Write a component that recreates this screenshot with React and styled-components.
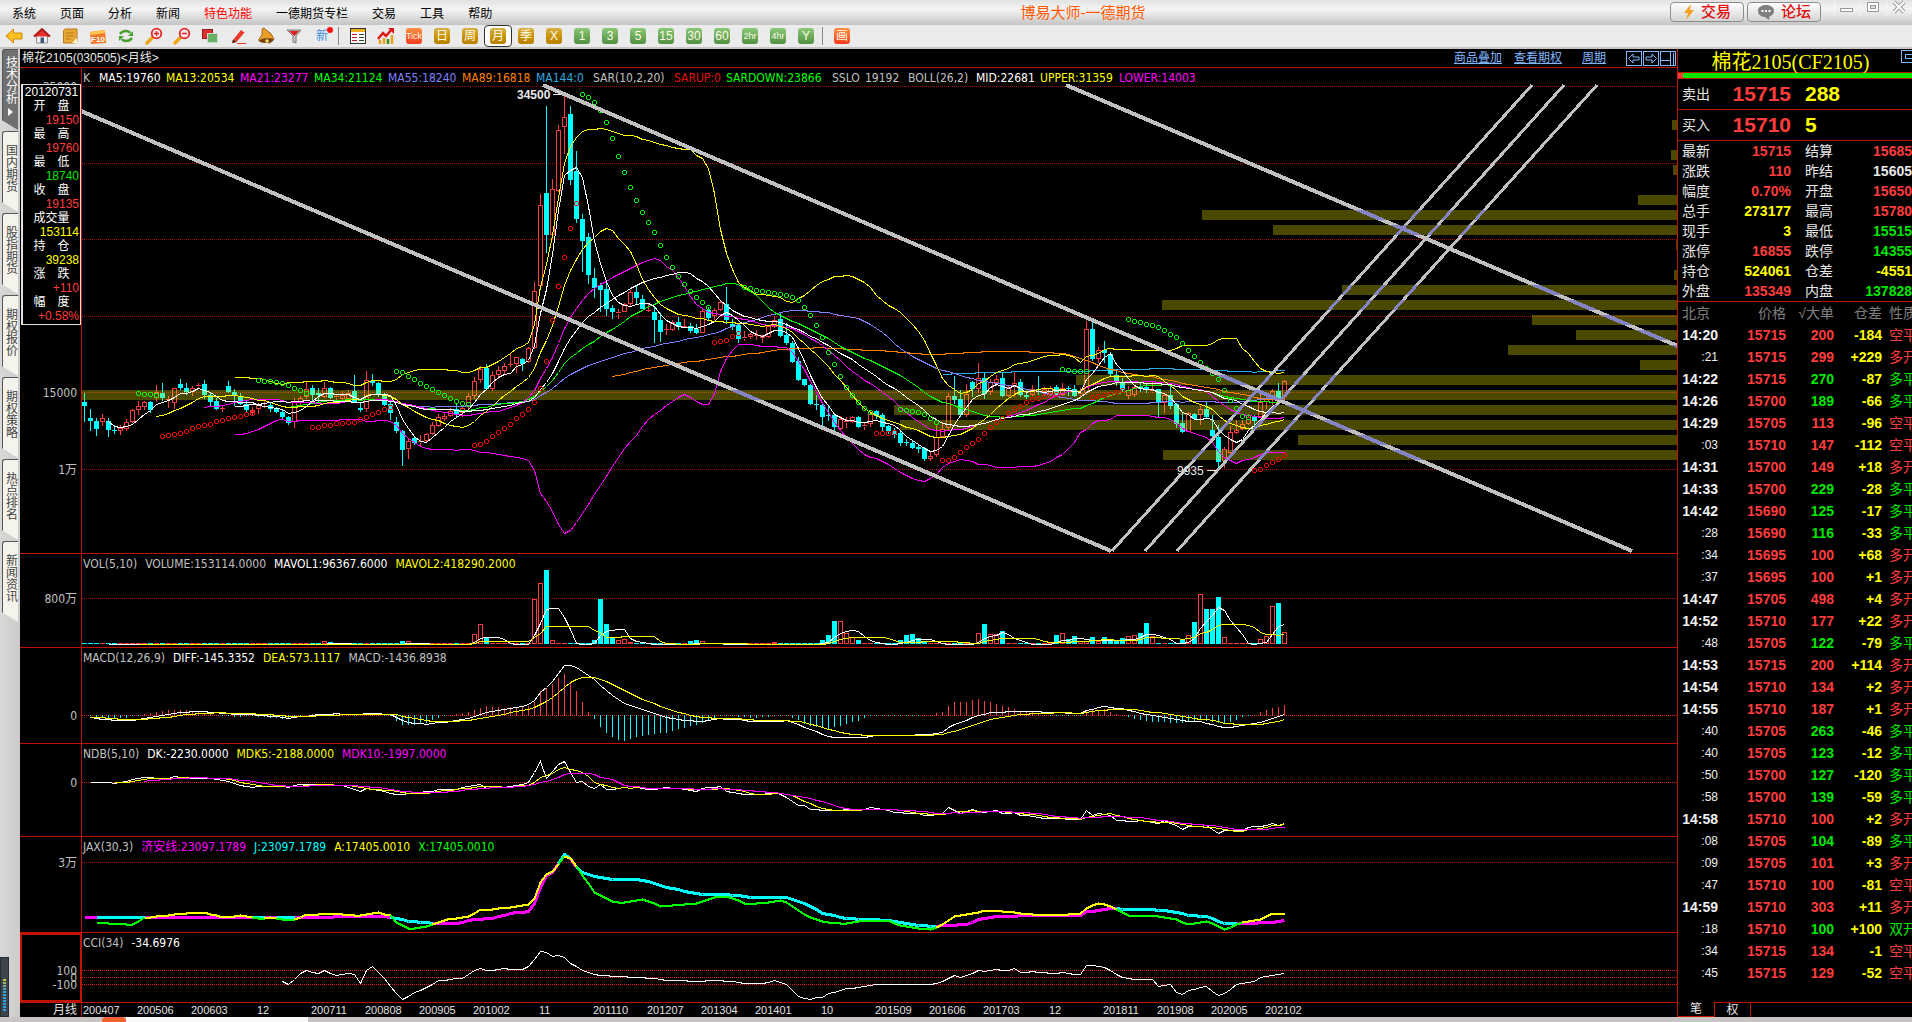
import React from 'react';
import styled, { createGlobalStyle, css } from 'styled-components';

/* ------------------------------------------------------------------ */
/* Palette                                                             */
/* ------------------------------------------------------------------ */
const C = {
  red: '#ff3c3c', cyan: '#00ffff', yellow: '#ffff00', green: '#00e600', lime: '#00ff00',
  white: '#ffffff', silver: '#c0c0c0', magenta: '#ff00ff', violet: '#8080ff',
  orange: '#ff8000', sky: '#30a8e0', pure: '#ff0000', rule: '#c01400', grey: '#808080',
};

const UI = '"Liberation Sans", "Noto Sans CJK SC", sans-serif';
const TAHOMA = '"DejaVu Sans Condensed", "Liberation Sans", "Noto Sans CJK SC", sans-serif';

const Global = createGlobalStyle`
  *, *::before, *::after { box-sizing: border-box; }
  body { margin: 0; background: #c8c4c4; font-family: ${UI}; font-size: 12px; line-height: 14px; }
  button { font: inherit; color: inherit; padding: 0; border: 0; background: none; }
`;

/* ------------------------------------------------------------------ */
/* Window frame                                                        */
/* ------------------------------------------------------------------ */
const Window = styled.div`
  display: flex; flex-direction: column; min-height: 100vh; overflow: hidden;
`;
const MenuBar = styled.header`
  display: flex; align-items: center; height: 25px;
  background: linear-gradient(#e2e2e2, #f4f4f4 35%, #e4e4e4 60%, #c4c4c4);
`;
const Menu = styled.nav`display: flex; gap: 24px; padding: 2px 0 0 12px;`;
const MenuItem = styled.button`color: ${p => (p.$hot ? '#ff0000' : '#000')}; white-space: nowrap;`;
const WindowTitle = styled.h1`
  flex: 1; margin: 0; padding-left: 4px; text-align: center; font-size: 15px; line-height: 20px; font-weight: 400; color: #ff5a00;
`;
const HeadButtons = styled.div`display: flex; gap: 3px; align-self: flex-start; padding-top: 2px;`;
const HeadButton = styled.button`
  display: flex; align-items: center; justify-content: center; gap: 6px; width: 74px; height: 20px;
  border: 1px solid #8c8c8c; border-radius: 4px; background: linear-gradient(#fff, #d4d4d4);
  color: #e01010; font-size: 15px; font-weight: 500;
`;
const WinControls = styled.div`
  display: flex; align-self: flex-start; margin-left: 13px; width: 78px; height: 16px;
`;
const WinControl = styled.button`
  width: 25px; flex: none; height: 16px; border-left: 1px solid #f4f4f4;
  & + & { margin-left: 1px; }
`;

/* ------------------------------------------------------------------ */
/* Toolbar                                                             */
/* ------------------------------------------------------------------ */
const Toolbar = styled.div`
  display: flex; align-items: center; height: 24px;
  background: #ebebeb; border-bottom: 2px solid #c8c4c4;
`;
const ToolButton = styled.button`
  display: flex; align-items: center; justify-content: center; width: 28px; height: 22px;
  ${p => p.$on && css`background: #fff; border: 1px solid #333; border-radius: 4px;`}
`;
const ToolSep = styled.span`width: 8px; height: 18px; border-left: 1px solid #8a8a8a; margin-left: 2px; margin-right: -2px;`;
const tones = {
  gold: 'linear-gradient(#d8b04a, #c89000 60%, #b88000)',
  green: 'linear-gradient(#8cc878, #509040)',
  red: 'linear-gradient(#ff9040, #f03c20)',
};
const Chip = styled.span`
  display: flex; align-items: center; justify-content: center; width: 16px; height: 16px;
  border-radius: 3px; background: ${p => tones[p.$tone]}; color: #fffbe8;
  font-size: ${p => (p.$small ? 9 : 12)}px; line-height: 16px; white-space: nowrap;
`;
const NewChip = styled.span`
  position: relative; color: #3c8ce0; font-size: 12px;
  &::after { content: ''; position: absolute; right: -5px; top: -2px; width: 6px; height: 6px; border-radius: 3px; background: #ff1010; }
`;

/* ------------------------------------------------------------------ */
/* Side tabs                                                           */
/* ------------------------------------------------------------------ */
const Body = styled.div`display: flex; flex: 1; min-height: 0;`;
const SideTabs = styled.nav`
  display: flex; flex-direction: column; justify-content: space-between; width: 20px; flex: none;
  background: linear-gradient(90deg, #d8d8d8, #cecaca);
`;
const TabStack = styled.div`display: flex; flex-direction: column; gap: 1px; padding-left: 2px;`;
const SideTab = styled.button`
  display: flex; align-items: center; justify-content: center; gap: 4px; width: 16px; height: 81px; padding-bottom: 8px;
  writing-mode: vertical-rl; text-orientation: upright; font-size: 12px; line-height: 16px;
  color: ${p => (p.$on ? '#fff' : '#444')};
  background: ${p => (p.$on ? '#707070' : '#f4f3ec')};
  border-left: 1px solid #555; border-top: 1px solid #555; border-radius: 3px 0 0 0;
  clip-path: polygon(0 0, 100% 0, 100% 100%, 0 88%);
`;
const Meter = styled.div`
  width: 9px; height: 60px; padding: 20px 2px 4px; background: #3c444c; border: 1px solid #262c34;
  &::before {
    content: ''; display: block; height: 34px;
    background: repeating-linear-gradient(#3c444c 0 1px, transparent 1px 3px), linear-gradient(#d8c820, #30a0e0 40%);
  }
`;

/* ------------------------------------------------------------------ */
/* Chart area                                                          */
/* ------------------------------------------------------------------ */
const ChartArea = styled.main`
  display: flex; flex-direction: column; flex: 1; min-width: 0; background: #000;
`;
const ChartHead = styled.div`
  display: flex; align-items: center; height: 19px; padding-left: 2px; color: #e8e8e8;
  border-bottom: 1px solid ${C.rule};
`;
const ChartName = styled.h2`flex: 1; margin: 0; font-size: 12px; font-weight: 400;`;
const HeadLinks = styled.div`display: flex; align-items: center;`;
const HeadLink = styled.a`
  color: #80b8ff; text-decoration: underline; margin-right: ${p => p.$gap || 12}px;
`;
const NavBoxes = styled.div`display: flex; gap: 1px; padding-right: 1px;`;
const NavBox = styled.button`width: 16px; height: 15px; border: 1px solid #80b8ff; display: flex; align-items: center; justify-content: center;`;

const Panel = styled.section`
  display: flex; position: relative; flex: ${p => (p.$h ? 'none' : '1')};
  ${p => p.$h && css`height: ${p.$h}px; border-top: 1px solid ${C.rule};`}
`;
const Axis = styled.div`
  width: 62px; flex: none; border-right: 1px solid ${C.rule};
  ${p => p.$framed && css`outline: 2px solid ${C.rule}; outline-offset: -2px;`}
`;
const Plot = styled.div`display: flex; flex-direction: column; flex: 1; min-width: 0;`;
const Legend = styled.div`
  display: flex; align-items: center; height: 16px; padding-top: 3px; padding-left: 1px; font-family: ${TAHOMA}; font-size: 12px; white-space: nowrap;
`;
const LegendItem = styled.span`
  color: ${p => p.$c}; flex: none;
  ${p => (p.$w ? css`width: ${p.$w}px;` : css`margin-right: 8px;`)}
`;
const Canvas = styled.svg`
  display: block; width: 100%; height: 100%; flex: 1; min-height: 0; overflow: hidden;
  font-family: ${TAHOMA}; font-size: 12px;
`;
const PriceMark = styled.text`font-family: ${UI}; fill: #e8e8e8; font-weight: ${p => (p.$bold ? 700 : 400)};`;
const DateRow = styled.div`
  display: flex; height: 15px; border-top: 1px solid ${C.rule}; color: #e0e0e0; line-height: 14px; overflow: hidden;
`;
const Period = styled.div`width: 62px; flex: none; text-align: right; padding-right: 4px; border-right: 1px solid ${C.rule};`;
const DateLabel = styled.span`flex: none; width: ${p => (p.$wide ? 66 : 54)}px; font-size: 11px; padding-left: 1px;`;

const DataBox = styled.dl`
  position: absolute; left: 1px; top: 16px; width: 60px; margin: 0; background: #000; color: #fff;
  border: 1px solid #e0e0e0; border-left-width: 2px; line-height: 14px; padding-bottom: 1px;
`;
const DataDate = styled.div`font-size: 12px; text-align: center;`;
const DataKey = styled.dt`text-align: center; white-space: pre;`;
const DataVal = styled.dd`margin: 0; text-align: right; padding-right: 1px; color: ${p => p.$c};`;

/* ------------------------------------------------------------------ */
/* Quote panel                                                         */
/* ------------------------------------------------------------------ */
const Quote = styled.aside`
  display: flex; flex-direction: column; width: 235px; flex: none; background: #000; overflow: hidden;
  border-left: 1px solid ${C.rule};
`;
const QuoteHead = styled.div`display: flex; height: 24px; border-bottom: 1px solid ${C.rule};`;
const QuoteName = styled.h2`
  flex: 1; margin: 0; padding-left: 2px; text-align: center; color: ${C.yellow}; font-weight: 400;
  font-family: "Liberation Serif", "Noto Sans CJK SC", serif; font-size: 20px; line-height: 26px; white-space: nowrap;
`;
const QuoteMax = styled.button`width: 11px; height: 13px; margin-top: 1px; border: 1px solid #80b8ff; border-right: 0; padding: 3px 0 3px 3px;
  &::before { content: ''; display: block; height: 5px; border: 1px solid #80b8ff; border-right: 0; }`;
const Balance = styled.div`
  height: 6px; border-bottom: 1px solid ${C.rule}; border-left: 5px solid ${C.red}; background: ${C.green};
`;
const Level = styled.div`
  display: flex; align-items: center; height: 31px; padding-left: 4px; border-bottom: 1px solid ${C.rule};
  color: #e8e8e8; font-size: 14px;
`;
const LevelPrice = styled.span`width: 81px; text-align: right; color: ${C.red}; font-size: 21px; font-weight: 700;`;
const LevelQty = styled.span`margin-left: 14px; color: ${C.yellow}; font-size: 21px; font-weight: 700;`;
const Facts = styled.dl`
  display: grid; grid-template-columns: 28px 81px 42px 79px; grid-auto-rows: 20px; align-items: center; margin: 0; padding-left: 4px;
  border-bottom: 1px solid ${C.rule}; font-size: 14px;
`;
const FactKey = styled.dt`color: #e8e8e8; text-align: right;`;
const FactVal = styled.dd`margin: 0; text-align: right; font-weight: 700; color: ${p => p.$c};`;
const Ticks = styled.table`
  table-layout: fixed; width: 247px; border-collapse: collapse; font-size: 14px; line-height: 22px; flex: none;
  th { font-weight: 400; color: ${C.grey}; }
  td, th { padding: 0; height: 22px; text-align: right; white-space: nowrap; }
  th:first-child { padding-left: 4px; text-align: left; }
  td:last-child, th:last-child { text-align: left; padding-left: 7px; }
`;
const Num = styled.td`color: ${p => p.$c}; font-weight: ${p => (p.$thin ? 400 : 700)}; ${p => p.$sec && css`font-size: 12px;`}`;
const Foot = styled.div`display: flex; height: 15px; margin-top: auto; color: #e8e8e8;`;
const FootTab = styled.button`
  width: ${p => (p.$on ? 37 : 36)}px; border-right: 1px solid ${C.rule}; line-height: 14px;
  ${p => (p.$on ? css`border-bottom: 1px solid ${C.rule};` : css`border-top: 1px solid ${C.rule};`)}
`;
const FootRest = styled.span`flex: 1; border-top: 1px solid ${C.rule};`;
const Strip = styled.footer`
  display: flex; height: 5px; background: #c8c4c4; padding-left: 102px;
  &::before { content: ''; width: 24px; height: 5px; background: #f06030; border-radius: 4px 4px 0 0; }
  &::after { content: ''; width: 182px; height: 5px; background: #f8f8f8; }
`;

/* ------------------------------------------------------------------ */
/* Price data. Heights are stored in thirds of a pixel; `base` shifts  */
/* one block of months. Row: kind, body top, body bottom, high, low.   */
/* ------------------------------------------------------------------ */
const block = (base, text) =>
  text.trim().split(';').map(s => {
    const [k, ...n] = s.trim().split(' ');
    const [t, b, h, l] = n.map(v => Math.round((Number(v) + base) / 3));
    return { up: k === 'r', t, b, h, l };
  });

const CANDLES = [
  ...block(990, `c 216 228 190 276;c 264 273 236 304;c 273 297 264 318;r 264 276 252 288;c 272 300 264 320;c 299 302 284 312;r 294 302 286 314;r 276 298 268 302;r 240 276 236 280;r 229 240 214 256;r 216 232 212 240;c 216 240 214 248;r 187 205 165 215;c 190 205 158 214;r 208 212 198 234;r 175 218 174 236;c 162 174 147 180;c 173 187 160 194;r 173 186 168 198;r 165 171 160 178;c 162 196 150 206;c 195 216 188 228;c 213 237 204 240;r 235 238 226 246;c 168 186 153 190;c 186 199 176 228;c 200 222 188 226;c 222 241 214 246;r 240 248 232 258;r 223 238 218 252;r 219 222 214 234;c 225 236 215 246;c 236 247 232 250;c 247 262 240 270;c 261 279 258 284;r 214 277 204 294;r 203 218 198 226;r 178 200 155 206;c 174 194 164 214;c 188 196 174 216;r 174 200 156 203;c 174 204 170 208;r 198 205 192 210;r 196 208 184 212;r 188 207 180 214;c 183 216 136 220;c 234 240 218 246;r 151 238 124 246;c 152 160 132 168;c 159 192 156 202;c 196 224 190 228;c 222 250 214 270;c 276 304 260 310;c 303 360 300 408;r 334 358 326 388;c 324 339 318 346;r 333 340 316 348;r 313 334 308 340;r 286 311 276 316;r 260 287 252 292;r 259 266 250 272;r 242 257 234 262;c 238 254 220 260;r 235 250 226 262;r 199 232 190 240;r 152 199 142 206;r 118 151 108 158;c 114 177 102 180;r 136 177 124 182;r 121 134 108 146;r 107 122 98 132;r 103 106 73 110;r 82 103 80 130;c 88 103 84 124;r 55 97 50 100`),
  ...block(0, `r 874 1045 846 1047;r 616 857 582 860;c 580 704 318 758;r 568 706 538 718;r 390 574 375 575;r 352 382 284 462;c 342 540 318 556;c 514 656 454 668;c 657 722 642 816;c 712 824 698 852;c 834 863 804 893;c 855 869 848 935;c 867 926 842 948;c 925 937 915 957;r 937 942 927 957;r 913 935 910 937;r 877 911 870 918;c 876 893 856 914;c 898 926 885 928;r 930 934 910 936;c 936 960 922 1028`),
  ...block(900, `c 60 95 38 127;r 88 90 72 106;r 66 90 60 94;c 66 82 50 90;r 79 82 58 85;c 78 94 70 98;c 88 98 72 101;r 34 98 26 98;c 30 53 20 60;r 31 48 25 60;r 6 30 0 34;c 12 60 -38 72;c 71 80 56 90;c 75 117 70 130;r 112 117 92 124;r 103 112 98 117;r 106 108 90 120;r 106 114 104 130;r 78 110 74 114;r 59 80 48 84;c 57 108 38 112;c 104 130 70 134;c 128 186 122 190;c 184 240 172 243;c 237 255 236 258;c 254 312 252 315;c 312 316 285 330;c 315 350 308 382;c 346 349 316 362;c 345 382 340 400;r 357 386 348 390;r 364 368 350 384;r 352 367 348 370;c 351 380 348 384;r 374 380 366 390;r 342 373 330 382;c 334 348 330 358;c 345 381 340 392;c 378 393 374 402;c 392 404 385 414;c 400 430 392 438;c 427 430 416 438;c 430 444 420 446;c 441 446 436 458;c 445 477 440 483;r 468 476 452 484;r 410 466 375 470;r 386 410 365 414;r 289 385 280 390;c 289 301 228 313;c 297 344 270 350;r 283 344 252 350;c 246 266 243 292;r 235 268 188 280;c 234 282 218 298;r 245 275 238 286;r 236 248 225 258;c 234 288 218 291;r 262 288 256 292;r 250 262 216 292;c 246 286 238 290;c 285 291 278 296;r 267 286 254 288;c 268 271 228 284;r 268 276 262 288;r 265 284 258 288;c 262 284 254 290;r 264 285 250 288;c 265 268 258 288;c 266 288 255 291;r 280 286 265 290;r 88 280 62 286;c 87 177 65 182;r 151 177 140 190;c 149 160 124 190;c 163 222 155 228;c 226 247 212 258;c 245 270 235 280;r 270 287 258 296;r 261 286 254 290;c 260 266 248 275;c 262 271 252 278;r 270 276 245 280;c 268 308 266 354;r 285 308 280 340;c 284 318 252 326;c 312 373 310 384;c 370 396 340 399;r 340 395 336 397;c 343 357 340 360;r 326 346 318 376;c 328 350 306 356;c 390 408 345 412;c 411 486 376 504;r 448 483 440 503;r 397 458 378 462;r 389 400 360 402;r 373 388 360 390;r 351 372 342 376;c 351 364 345 392;r 307 350 276 354;r 293 306 286 328;r 273 295 266 316;c 273 300 248 304;r 244 290 240 305`),
];
const N = CANDLES.length;
const xAt = i => 84 + 6 * i;
const closes = CANDLES.map(c => (c.up ? c.t : c.b));

const sma = (list, n) => list.map((_, i) => {
  if (i < n - 1 || list[i - n + 1] == null) return null;
  let s = 0;
  for (let k = i - n + 1; k <= i; k += 1) s += list[k];
  return s / n;
});
const band = (list, n, f) => {
  const mid = sma(list, n);
  return mid.map((m, i) => {
    if (m == null) return null;
    let s = 0;
    for (let k = i - n + 1; k <= i; k += 1) s += (list[k] - m) ** 2;
    return m + f * Math.sqrt(s / n);
  });
};
const points = list => list
  .map((y, i) => (y == null ? null : `${xAt(i) + 0.5},${Math.round(y) + 0.5}`))
  .filter(Boolean).join(' ');

/* Knots "month,height" are joined month by month. */
const knots = (base, text) => {
  const ks = text.trim().split(' ').map(s => s.split(',').map(Number));
  const out = Array(N).fill(null);
  for (let j = 0; j < ks.length - 1; j += 1) {
    const [a, ya] = ks[j];
    const [b, yb] = ks[j + 1];
    for (let i = Math.ceil(a); i <= Math.min(b, N - 1); i += 1) {
      out[i] = (base + ya + ((yb - ya) * (i - a)) / (b - a)) / 3;
    }
  }
  return out;
};

const SAR = [
  [9, C.lime, 990, [191, 193, 194, 196]],
  [13, C.pure, 990, [320, 317, 314, 310, 305, 295, 290, 287, 282, 275, 270, 266, 262, 258, 254, 250]],
  [29, C.lime, 990, [152, 154, 154, 156, 160, 165, 174, 182, 191]],
  [38, C.pure, 990, [292, 291, 287, 285, 281, 279, 278, 276, 269, 262, 253, 246, 238, 232]],
  [52, C.lime, 990, [125, 128, 139, 149, 160, 169, 178, 187, 197, 206, 214, 220, 223]],
  [65, C.pure, 990, [347, 343, 335, 320, 307, 296, 283, 266, 252, 238, 217, 175, 95]],
  [78, C.pure, 0, [962, 860, 772, 686, 610]],
  [83, C.lime, 0, [284, 293, 308, 330, 368, 416, 470, 518, 563, 602, 638, 668, 698, 737, 773, 803, 830, 854, 875, 893, 908, 923]],
  [105, C.pure, 900, [128, 125, 122, 110, 101]],
  [110, C.lime, 0, [862, 865, 872, 875, 877, 880, 883, 887, 892, 902, 922, 947, 977, 1013]],
  [124, C.lime, 900, [158, 194, 230, 263, 287, 308, 325, 338]],
  [132, C.pure, 900, [401, 401, 400, 398]],
  [136, C.lime, 900, [328, 332, 334, 337, 343, 355, 368]],
  [143, C.pure, 900, [482, 482, 473, 458, 443, 431, 419, 401, 383, 367, 354, 341, 328, 319, 307, 299, 295, 290, 287, 283]],
  [163, C.lime, 900, [209, 211, 213, 214, 215]],
  [168, C.pure, 900, [293, 290, 287, 283, 277, 272]],
  [174, C.lime, 900, [58, 63, 68, 73, 77, 82, 90, 103, 113, 130, 152, 170, 188, 205, 220, 238, 272, 302, 325, 350, 353]],
  [195, C.pure, 900, [511, 509, 497, 488, 478, 467]],
];

/* Volume-at-price bars: top, left edge. */
const PROFILE = [
  [120, 1672], [150, 1671], [165, 1673], [195, 1638], [210, 1202], [225, 1273], [240, 1676], [270, 1674],
  [285, 1342], [300, 1162], [315, 1532], [330, 1576], [345, 1508], [360, 1640], [375, 1076], [390, 82],
  [405, 894], [420, 900], [435, 1298], [450, 1163],
];
const TRENDS = [
  [81, 111, 1111, 551, 4], [543, 85, 1632, 551, 4], [1066, 85, 1680, 347, 4],
  [1532, 85, 1112, 551, 3], [1564, 85, 1145, 551, 3], [1597, 85, 1177, 551, 3],
];

const VOL = Array(N).fill(1);
[[40, 3, 2], [53, 3, 3], [65, 10, 20, 6], [75, 45, 61, 74, 4], [85, 4, 45, 20, 6, 4, 5, 2],
  [101, 3, 4, 3], [115, 2], [123, 4, 9, 23, 23, 11, 7, 4], [136, 4, 9, 10, 6, 3], [149, 11, 20, 10, 10, 13],
  [162, 9, 11, 5, 8, 3, 3, 7, 3, 7, 3, 4, 6, 8, 9, 11, 21, 8], [183, 4, 9, 22, 50, 35, 35, 47, 7],
  [196, 5, 8, 38, 41, 12]].forEach(([s, ...v]) => v.forEach((h, k) => { VOL[s + k] = h; }));

const DIFF = knots(1920, '1,230 3,236 5,240 7,241 9,237 12,228 15,218 19,212 22,216 25,222 28,222 31,227 34,234 38,224 42,220 45,222 48,218 51,222 53,241 55,248 57,251 60,245 64,233 67,216 70,208 73,197 74,192 75,180 76,155 77,140 78,122 79,98 80,76 81,76 82,80 83,92 85,118 87,150 89,178 90,190 93,207 97,230 100,239 103,243 106,235 109,238 112,244 117,241 119,252 121,268 124,287 126,292 129,292 132,285 141,283 143,275 144,262 145,252 147,240 149,224 151,217 154,214 159,214 161,217 166,218 167,209 169,202 170,199 173,205 176,218 179,228 182,238 184,243 186,244 188,252 190,261 192,259 195,250 198,234 200,222');
const DEA = DIFF.reduce((out, d, i) => {
  const prev = out[i - 1];
  out.push(d == null ? null : prev == null ? d : prev + (d - prev) * 0.2);
  return out;
}, []);

const DK = knots(1920, '1,427 3,426 5,428 7,422 8,416 10,411 14,415 15,409 18,413 21,413 24,424 26,434 28,440 31,437 34,440 36,431 40,434 43,435 45,448 46,452 47,444 50,453 52,463 53,463 55,457 58,453 59,446 62,446 64,438 66,433 67,443 70,440 72,434 74,427 76,364 77,415 79,372 80,363 82,427 83,423 84,437 85,443 86,433 87,446 89,445 91,438 94,448 97,442 100,447 102,453 103,443 105,441 106,437 107,453 110,463 113,462 115,455 117,470 119,496 120,496 121,507 125,510 127,507 129,510 131,502 133,506 135,515 139,520 140,526 143,520 144,500 146,518 148,508 150,516 152,510 153,520 155,517 156,525 158,527 160,535 162,533 166,538 167,509 168,525 169,519 171,525 172,539 174,543 176,541 179,550 180,541 182,555 183,568 184,559 187,556 189,580 190,570 193,570 194,560 196,558 198,549 199,556 200,550');
const JLINE = knots(1920, '0,832 50,829 52,834 54,842 58,848 62,848 65,838 68,833 71,820 74,812 75,790 76,740 77,705 78,695 79,668 80,643 81,655 82,680 83,695 85,708 88,716 92,718 94,722 97,740 102,760 108,764 112,772 117,772 120,788 123,818 127,834 132,838 135,842 137,850 140,856 142,858 143,856 147,852 149,838 152,829 158,825 166,824 167,814 171,804 175,808 178,808 181,812 184,824 187,829 190,848 193,848 197,847 200,841');
const ALINE = knots(1920, '2,846 5,850 8,851 10,832 14,824 18,816 20,816 23,831 26,825 29,833 31,832 34,838 35,838 37,822 41,819 46,825 49,815 51,826 52,845 54,863 56,862 58,852 61,835 64,829 66,808 69,805 72,797 74,793 75,775 76,725 77,702 78,692 79,672 80,648 81,655 82,678 83,705 85,755 88,783 90,786 93,776 94,782 96,797 102,788 105,770 107,768 110,788 114,787 116,779 117,785 119,810 121,832 124,847 127,848 130,841 134,841 136,856 141,867 143,852 145,828 148,820 150,810 153,812 158,822 166,820 167,803 169,788 171,797 174,824 178,825 182,838 184,852 187,842 190,867 193,846 196,838 198,820 200,818');
const CCI = knots(1920, '33,1023 34,1031 36,1000 37,991 39,1000 40,991 42,1006 44,1000 45,1002 46,1028 47,991 48,979 50,1015 52,1058 53,1078 55,1055 57,1042 59,1021 63,1013 65,990 66,983 67,991 70,985 73,988 74,978 75,958 76,932 77,935 78,948 79,946 80,952 81,968 83,990 85,1001 88,1009 93,1010 96,1018 102,1023 106,1019 109,1027 113,1029 115,1021 117,1033 119,1068 121,1078 122,1072 123,1072 124,1060 127,1045 130,1039 132,1031 141,1033 143,1023 145,1006 146,1012 149,991 150,994 152,986 154,991 155,985 156,996 158,993 162,1000 163,997 166,1003 167,976 168,976 170,982 173,1010 174,1015 178,1018 179,1039 181,1033 182,1056 183,1063 184,1050 187,1037 189,1066 190,1060 192,1033 195,1024 196,1012 200,1000');
const J_RUNS = [[0, 2, 'm'], [2, 10, 'c'], [10, 28, 'm'], [28, 30, 'c'], [30, 32, 'm'], [32, 35, 'c'], [35, 51, 'm'], [51, 58, 'c'], [58, 79, 'm'], [79, 81, 'c'], [81, 82, 'm'], [82, 142, 'c'], [142, 172, 'm'], [172, 192, 'c'], [192, 200, 'm']];
const A_RUNS = [[2, 10, 'g'], [10, 28, 'y'], [28, 30, 'g'], [30, 32, 'y'], [32, 35, 'g'], [35, 51, 'y'], [51, 58, 'g'], [58, 79, 'y'], [79, 80, 'g'], [80, 82, 'y'], [82, 142, 'g'], [142, 172, 'y'], [172, 193, 'g'], [193, 200, 'y']];
const RUN_COLOR = { m: C.magenta, c: C.cyan, g: C.lime, y: C.yellow };

/* ------------------------------------------------------------------ */
/* Drawing helpers                                                     */
/* ------------------------------------------------------------------ */
const Line = ({ data, color, width = 1 }) => (
  <polyline points={points(data)} fill="none" stroke={color} strokeWidth={width} />
);
const Runs = ({ data, runs, width }) => runs.map(([a, b, k]) => (
  <polyline key={a} fill="none" stroke={RUN_COLOR[k]} strokeWidth={width}
    points={points(data.map((y, i) => (i >= a && i <= b ? y : null)))} />
));
const Grid = ({ ys, bright }) => ys.map(y => (
  <line key={y} x1="82" x2="6000" y1={y + 0.5} y2={y + 0.5} stroke={bright ? '#e02020' : '#a80c0c'} strokeDasharray="1 1" />
));
/* A small ring drawn pixel by pixel. */
const Ring = ({ x, y, color }) => (
  <path fill={color} d={`M${x - 1} ${y - 2}h3v1h-3zM${x - 1} ${y + 2}h3v1h-3zM${x - 2} ${y - 1}h1v3h-1zM${x + 2} ${y - 1}h1v3h-1z`} />
);
const Drawing = ({ top, label, children }) => (
  <Canvas role="img" aria-label={label} shapeRendering="crispEdges">
    <g transform={`translate(-82 ${-top})`}>{children}</g>
  </Canvas>
);
const AxisLabels = ({ top, items }) => (
  <Canvas aria-hidden="true">
    <g transform={`translate(-20 ${-top})`}>
      {items.map(([y, t]) => <text key={y} x="77" y={y + 5} textAnchor="end" fill={C.silver}>{t}</text>)}
    </g>
  </Canvas>
);
const LegendRow = ({ items }) => (
  <Legend>{items.map(([t, c, w]) => <LegendItem key={t} $c={c} $w={w}>{t}</LegendItem>)}</Legend>
);
const SubPanel = ({ name, top, height, legend, axis, framed, children }) => (
  <Panel $h={height}>
    <Axis $framed={framed}><AxisLabels top={top + 1} items={axis} /></Axis>
    <Plot>
      <LegendRow items={legend} />
      <Drawing top={top + 17} label={name}>{children}</Drawing>
    </Plot>
  </Panel>
);

const PricePlot = () => (
  <Drawing top={84} label="K线">
    <defs>
      <clipPath id="profile">
        {PROFILE.map(([y, x]) => <rect key={y} x={x} y={y} width="6000" height="10" />)}
      </clipPath>
    </defs>
    <Grid ys={[86, 163, 239, 316, 392, 469]} />
    {CANDLES.map((c, i) => {
      const x = xAt(i);
      const h = Math.max(1, c.b - c.t);
      return c.up ? (
        <g key={i} fill="none" stroke={C.red}>
          <path d={`M${x + 0.5} ${c.h}V${c.t}M${x + 0.5} ${c.b}V${c.l}`} />
          {h < 3 ? <path d={`M${x - 2} ${c.t + 0.5}H${x + 3}`} /> : <rect x={x - 1.5} y={c.t + 0.5} width="4" height={h - 1} />}
        </g>
      ) : (
        <g key={i} fill={C.cyan}>
          <rect x={x} y={c.h} width="1" height={c.l - c.h} />
          <rect x={x - 2} y={c.t} width="5" height={h} />
        </g>
      );
    })}
    {PROFILE.map(([y, x]) => <rect key={y} x={x} y={y} width="6000" height="10" fill="#f8f000" fillOpacity="0.3" />)}
    <Line data={sma(closes, 144)} color={C.sky} />
    <Line data={sma(closes, 89)} color={C.orange} />
    <Line data={sma(closes, 55)} color={C.violet} />
    <Line data={sma(closes, 34)} color={C.lime} />
    <Line data={sma(closes, 21)} color={C.magenta} />
    <Line data={sma(closes, 13)} color={C.yellow} />
    <Line data={sma(closes, 26)} color={C.white} />
    <Line data={band(closes, 26, -2)} color={C.yellow} />
    <Line data={band(closes, 26, 2)} color={C.magenta} />
    <Line data={sma(closes, 5)} color={C.white} />
    {SAR.map(([s, color, base, vs]) => vs.map((v, k) => (
      <Ring key={`${s}-${k}`} x={xAt(s + k)} y={Math.floor((v + base) / 3)} color={color} />
    )))}
    {TRENDS.map(([a, b, c, d, w]) => <line key={a} x1={a} y1={b} x2={c} y2={d} stroke="#c0c0c0" strokeWidth={w} />)}
    <g clipPath="url(#profile)">
      {TRENDS.map(([a, b, c, d, w]) => <line key={a} x1={a} y1={b} x2={c} y2={d} stroke="#8484c4" strokeWidth={w} />)}
    </g>
    <PriceMark x="517" y="99" $bold>34500</PriceMark>
    <path d="M553 94.500H561M557 91L561 95" stroke="#e8e8e8" fill="none" />
    <PriceMark x="1177" y="475">9935</PriceMark>
    <path d="M1207 470.500H1216" stroke="#e8e8e8" fill="none" />
  </Drawing>
);

/* ------------------------------------------------------------------ */
/* Toolbar icons                                                       */
/* ------------------------------------------------------------------ */
const Zoomer = ({ plus }) => (
  <>
    <path d="M7.500 10.500L2 16" stroke="#f0a818" strokeWidth="3.500" strokeLinecap="round" />
    <circle cx="11.500" cy="6.500" r="4.800" fill="#ffe8e8" stroke="#e82828" strokeWidth="1.800" />
    <path d={plus ? 'M9 6.500H14M11.500 4V9' : 'M9 6.500H14'} stroke="#e82828" strokeWidth="1.500" />
  </>
);
const ICONS = {
  后退: <path d="M1 9L8.500 2V6H17V12H8.500V16Z" fill="#ffc020" stroke="#c88a10" />,
  首页: <><path d="M3.500 9V16H14.500V9" fill="#f0f0f0" stroke="#909090" /><rect x="7.500" y="10.500" width="3.500" height="5.500" fill="#405880" /><path d="M1 9.500L9 2L17 9.500" fill="#e03030" stroke="#b01818" strokeWidth="2" /></>,
  公告: <><path d="M2.500 3.500Q3 2 5 2H16V14Q16 16 13 16H2.500Z" fill="#e8a838" stroke="#b87818" /><path d="M5 6H13M5 9H13M5 12H10" stroke="#b87818" /><path d="M11 16L16 11V16Z" fill="#fff4d0" /></>,
  F10: <><path d="M1 5L16 3L17 16L2 17Z" fill="#f07828" /><path d="M1 5L16 3V6L2 8Z" fill="#ffc850" /><text x="9" y="15" fontSize="8" fontWeight="700" fill="#fff" textAnchor="middle" fontFamily="Liberation Sans">F10</text></>,
  刷新: <><path d="M3 7Q5 4 9 4Q12 4 13 6" fill="none" stroke="#48a030" strokeWidth="2.500" /><path d="M16 4V9H11Z" fill="#48a030" /><path d="M15 11Q13 14 9 14Q6 14 5 12" fill="none" stroke="#48a030" strokeWidth="2.500" /><path d="M2 14V9H7Z" fill="#48a030" /></>,
  放大: <Zoomer plus />,
  缩小: <Zoomer />,
  叠加: <><rect x="1.500" y="2.500" width="10" height="9" fill="#d83030" stroke="#a01818" /><rect x="6.500" y="6.500" width="10" height="9" fill="#68b068" stroke="#c8d8c8" /></>,
  画线: <><path d="M4 13L12 3L15.500 5.500L7.500 15L3 16Z" fill="#e83828" /><path d="M4 12.500L7.500 15L3 16Z" fill="#483020" /><path d="M8 16.500H17" stroke="#e83828" /></>,
  预警: <><path d="M6 1Q8 1 9 3Q14 5 17 12L13 16L2 14Q1 12 3 11Q6 8 5 3Z" fill="#e8a028" stroke="#a86010" /><ellipse cx="9.500" cy="13.500" rx="7" ry="2.200" transform="rotate(-4 9.500 13.500)" fill="#704010" /><circle cx="10" cy="14" r="1.800" fill="#ffd870" /></>,
  筛选: <><path d="M2 3H16L11 9V16L8 15V9Z" fill="#c8c8c8" stroke="#787878" /><path d="M4 4H14L9.500 9Z" fill="#e02020" /></>,
  报价: <><rect x="1.500" y="1.500" width="15" height="15" fill="#fff" stroke="#303030" /><rect x="2" y="2" width="14" height="3" fill="#f0b020" /><path d="M3 7.500H8M3 10.500H8M3 13.500H8" stroke="#c02020" /><path d="M10 7.500H15M10 10.500H15M10 13.500H15" stroke="#205020" /></>,
  走势: <><path d="M3 17V13M7 17V11M11 17V12M15 17V8" stroke="#e8a020" strokeWidth="2.500" /><path d="M11 17V12" stroke="#389030" strokeWidth="2.500" /><path d="M1 12L6 6L9 9L15 2" fill="none" stroke="#e01818" strokeWidth="2.500" /><path d="M11 1H17V7Z" fill="#e01818" /></>,
};
const Icon = ({ name }) => <svg width="18" height="18" viewBox="0 0 18 18" aria-hidden="true">{ICONS[name]}</svg>;

/* ------------------------------------------------------------------ */
/* Static texts                                                        */
/* ------------------------------------------------------------------ */
const MENU = ['系统', '页面', '分析', '新闻', '特色功能', '一德期货专栏', '交易', '工具', '帮助'];
const TOOLS = ['后退', '首页', '公告', 'F10', '刷新', '放大', '缩小', '叠加', '画线', '预警', '筛选'];
const CHIPS = [['Tick', 'red'], ['日', 'gold'], ['周', 'gold'], ['月', 'gold'], ['季', 'gold'], ['X', 'gold'],
  ['1', 'green'], ['3', 'green'], ['5', 'green'], ['15', 'green'], ['30', 'green'], ['60', 'green'], ['2hr', 'green'], ['4hr', 'green'], ['Y', 'green']];
const TABS = ['技术分析', '国内期货', '股指期货', '期权报价', '期权策略', '热点排名', '新闻资讯'];
const BOX = [['开　盘', '19150', C.red], ['最　高', '19760', C.red], ['最　低', '18740', C.green], ['收　盘', '19135', C.red],
  ['成交量', '153114', C.yellow], ['持　仓', '39238', C.yellow], ['涨　跌', '+110', C.red], ['幅　度', '+0.58%', C.red]];
const MAIN_LEGEND = [['K', C.silver, 16], ['MA5:19760', C.white, 67], ['MA13:20534', C.yellow, 74], ['MA21:23277', C.magenta, 74],
  ['MA34:21124', C.lime, 74], ['MA55:18240', C.violet, 74], ['MA89:16818', C.orange, 74], ['MA144:0', C.sky, 57],
  ['SAR(10,2,20)', C.silver, 81], ['SARUP:0', '#e01010', 52], ['SARDOWN:23866', C.lime, 106], ['SSLO', C.silver, 33],
  ['19192', C.silver, 43], ['BOLL(26,2)', C.silver, 68], ['MID:22681', C.white, 64], ['UPPER:31359', C.yellow, 79], ['LOWER:14003', C.magenta, 90]];
const DATES = ['200407', '200506', '200603', '12', '200711', '200808', '200905', '201002', '11', '201110', '201207', '201304',
  '201401', '10', '201509', '201606', '201703', '12', '201811', '201908', '202005', '202102'];
const FACTS = [
  ['最新', '15715', C.red, '结算', '15685', C.red], ['涨跌', '110', C.red, '昨结', '15605', '#e8e8e8'],
  ['幅度', '0.70%', C.red, '开盘', '15650', C.red], ['总手', '273177', C.yellow, '最高', '15780', C.red],
  ['现手', '3', C.yellow, '最低', '15515', C.green], ['涨停', '16855', C.red, '跌停', '14355', C.green],
  ['持仓', '524061', C.yellow, '仓差', '-4551', C.yellow], ['外盘', '135349', C.red, '内盘', '137828', C.green]];
const TICKS = `14:20 15715 200 -184 r空平|:21 15715 299 +229 r多开|14:22 15715 270 -87 g多平|14:26 15700 189 -66 g多平|14:29 15705 113 -96 r空平|:03 15710 147 -112 r空平|14:31 15700 149 +18 r多开|14:33 15700 229 -28 g多平|14:42 15690 125 -17 g多平|:28 15690 116 -33 g多平|:34 15695 100 +68 r多开|:37 15695 100 +1 r多开|14:47 15705 498 +4 r多开|14:52 15710 177 +22 r多开|:48 15705 122 -79 g多平|14:53 15715 200 +114 r多开|14:54 15710 134 +2 r多开|14:55 15710 187 +1 r多开|:40 15705 263 -46 g多平|:40 15705 123 -12 g多平|:50 15700 127 -120 g多平|:58 15700 139 -59 g多平|14:58 15710 100 +2 r多开|:08 15705 104 -89 g多平|:09 15705 101 +3 r多开|:47 15710 100 -81 r空平|14:59 15710 303 +11 r多开|:18 15710 100 +100 g双开|:34 15715 134 -1 r空平|:45 15715 129 -52 r空平`
  .split('|').map(s => s.split(' '));

export default function App() {
  return (
    <Window>
      <Global />
      <MenuBar>
        <Menu>{MENU.map(m => <MenuItem key={m} $hot={m === '特色功能'}>{m}</MenuItem>)}</Menu>
        <WindowTitle>博易大师-一德期货</WindowTitle>
        <HeadButtons>
          <HeadButton>
            <svg width="12" height="16" viewBox="0 0 12 16" aria-hidden="true"><path d="M8 0L1 9H5L3 16L11 6H7Z" fill="#f5a020" /></svg>
            交易
          </HeadButton>
          <HeadButton>
            <svg width="18" height="16" viewBox="0 0 18 16" aria-hidden="true"><path d="M9 1C4 1 1 3.500 1 7S4 13 8 13L12 16L12.500 12.500C15.500 11.500 17 9.500 17 7C17 3.500 14 1 9 1Z" fill="#808080" /><path d="M4.500 7H6.500M8 7H10M11.500 7H13.500" stroke="#fff" strokeWidth="2" /></svg>
            论坛
          </HeadButton>
        </HeadButtons>
        <WinControls>
          <WinControl aria-label="最小化"><svg width="14" height="14" viewBox="0 0 14 14"><rect x="0.500" y="8.500" width="12" height="3" fill="#fff" stroke="#9a9a9a" /></svg></WinControl>
          <WinControl aria-label="最大化"><svg width="14" height="14" viewBox="0 0 14 14"><rect x="1.500" y="2.500" width="11" height="9" fill="#fff" stroke="#9a9a9a" /><rect x="4.500" y="5.500" width="5" height="3" fill="#ddd" stroke="#9a9a9a" /></svg></WinControl>
          <WinControl aria-label="关闭"><svg width="14" height="14" viewBox="0 0 14 14"><path d="M2 2L12 12M12 2L2 12" stroke="#9a9a9a" strokeWidth="4" /><path d="M2 2L12 12M12 2L2 12" stroke="#fff" strokeWidth="2" /></svg></WinControl>
        </WinControls>
      </MenuBar>

      <Toolbar>
        {TOOLS.map(t => <ToolButton key={t} aria-label={t}><Icon name={t} /></ToolButton>)}
        <ToolButton><NewChip>新</NewChip></ToolButton>
        <ToolSep />
        <ToolButton aria-label="报价"><Icon name="报价" /></ToolButton>
        <ToolButton aria-label="走势"><Icon name="走势" /></ToolButton>
        {CHIPS.map(([t, tone]) => (
          <ToolButton key={t} $on={t === '月'}><Chip $tone={tone} $small={t.length > 2}>{t}</Chip></ToolButton>
        ))}
        <ToolSep />
        <ToolButton><Chip $tone="red">画</Chip></ToolButton>
      </Toolbar>

      <Body>
        <SideTabs>
          <TabStack>
            {TABS.map((t, i) => (
              <SideTab key={t} $on={i === 0}>
                {t}
                {i === 0 && <svg width="5" height="8" viewBox="0 0 5 8" aria-hidden="true"><path d="M0 0L5 4L0 8Z" fill="#fff" /></svg>}
              </SideTab>
            ))}
          </TabStack>
          <Meter />
        </SideTabs>

        <ChartArea>
          <ChartHead>
            <ChartName>棉花2105(030505)&lt;月线&gt;</ChartName>
            <HeadLinks>
              <HeadLink href="#overlay">商品叠加</HeadLink>
              <HeadLink href="#options" $gap={20}>查看期权</HeadLink>
              <HeadLink href="#period" $gap={20}>周期</HeadLink>
              <NavBoxes>
                <NavBox aria-label="左移"><svg width="12" height="11" viewBox="0 0 12 11"><path d="M0.500 5.500L5 1V4H11V7H5V10Z" fill="none" stroke="#80b8ff" /></svg></NavBox>
                <NavBox aria-label="右移"><svg width="12" height="11" viewBox="0 0 12 11"><path d="M11.500 5.500L7 1V4H1V7H7V10Z" fill="none" stroke="#80b8ff" /></svg></NavBox>
                <NavBox aria-label="布局"><svg width="14" height="13" viewBox="0 0 14 13"><path d="M9.500 0V13M0 8.500H9M12.500 1V13" stroke="#80b8ff" fill="none" /></svg></NavBox>
              </NavBoxes>
            </HeadLinks>
          </ChartHead>

          <Panel>
            <Axis><AxisLabels top={68} items={[[86, '35000'], [392, '15000'], [469, '1万']]} /></Axis>
            <Plot>
              <LegendRow items={MAIN_LEGEND} />
              <PricePlot />
            </Plot>
            <DataBox>
              <DataDate>20120731</DataDate>
              {BOX.map(([k, v, c]) => <React.Fragment key={k}><DataKey>{k}</DataKey><DataVal $c={c}>{v}</DataVal></React.Fragment>)}
            </DataBox>
          </Panel>

          <SubPanel name="成交量" top={553} height={94} axis={[[598, '800万']]}
            legend={[['VOL(5,10)', C.silver], ['VOLUME:153114.0000', C.silver], ['MAVOL1:96367.6000', C.white], ['MAVOL2:418290.2000', C.yellow]]}>
            <Grid ys={[598]} />
            {VOL.map((h, i) => (CANDLES[i].up && h > 2
              ? <rect key={i} x={xAt(i) - 1.5} y={644.5 - h} width="4" height={h - 1} fill="none" stroke={C.red} />
              : <rect key={i} x={xAt(i) - 2} y={644 - h} width="5" height={h} fill={CANDLES[i].up ? C.red : C.cyan} />))}
            <Line data={sma(VOL, 5).map(v => (v == null ? null : 645 - v))} color={C.white} />
            <Line data={sma(VOL, 10).map(v => (v == null ? null : 645 - v))} color={C.yellow} />
          </SubPanel>

          <SubPanel name="MACD" top={647} height={96} axis={[[715, '0']]}
            legend={[['MACD(12,26,9)', C.silver], ['DIFF:-145.3352', C.white], ['DEA:573.1117', C.yellow], ['MACD:-1436.8938', C.silver]]}>
            <Grid ys={[715]} bright />
            {DIFF.map((d, i) => {
              if (d == null) return null;
              const h = Math.round(2 * (DEA[i] - d));
              return <rect key={i} x={xAt(i)} y={h > 0 ? 716 - h : 715} width="1" height={Math.max(1, Math.abs(h))} fill={h > 0 ? C.red : C.cyan} />;
            })}
            <Line data={DIFF} color={C.white} />
            <Line data={DEA} color={C.yellow} />
          </SubPanel>

          <SubPanel name="NDB" top={743} height={93} axis={[[782, '0']]}
            legend={[['NDB(5,10)', C.silver], ['DK:-2230.0000', C.white], ['MDK5:-2188.0000', C.yellow], ['MDK10:-1997.0000', C.magenta]]}>
            <Grid ys={[782]} bright />
            <Line data={DK} color={C.white} />
            <Line data={sma(DK, 5)} color={C.yellow} />
            <Line data={sma(DK, 10)} color={C.magenta} />
          </SubPanel>

          <SubPanel name="JAX" top={836} height={96} axis={[[862, '3万']]}
            legend={[['JAX(30,3)', C.silver], ['济安线:23097.1789', C.magenta], ['J:23097.1789', C.cyan], ['A:17405.0010', C.yellow], ['X:17405.0010', C.lime]]}>
            <Grid ys={[862]} />
            <Runs data={JLINE} runs={J_RUNS} width={3} />
            <Runs data={ALINE} runs={A_RUNS} width={2} />
          </SubPanel>

          <SubPanel name="CCI" top={932} height={70} framed axis={[[970, '100'], [977, '0'], [984, '-100']]}
            legend={[['CCI(34)', C.silver], ['-34.6976', C.white]]}>
            <Grid ys={[970, 977, 984]} bright />
            <Line data={CCI} color={C.white} />
          </SubPanel>

          <DateRow>
            <Period>月线</Period>
            {DATES.map((d, i) => (
              <DateLabel key={`${d}-${i}`} $wide={DATES[i + 1] && DATES[i + 1].length === 2}>{d}</DateLabel>
            ))}
          </DateRow>
        </ChartArea>

        <Quote>
          <QuoteHead><QuoteName>棉花2105(CF2105)</QuoteName><QuoteMax aria-label="展开" /></QuoteHead>
          <Balance />
          <Level>卖出<LevelPrice>15715</LevelPrice><LevelQty>288</LevelQty></Level>
          <Level>买入<LevelPrice>15710</LevelPrice><LevelQty>5</LevelQty></Level>
          <Facts>
            {FACTS.map(([a, b, c, d, e, f]) => (
              <React.Fragment key={a}>
                <FactKey>{a}</FactKey><FactVal $c={c}>{b}</FactVal><FactKey>{d}</FactKey><FactVal $c={f}>{e}</FactVal>
              </React.Fragment>
            ))}
          </Facts>
          <Ticks>
            <colgroup><col width="40" /><col width="68" /><col width="48" /><col width="48" /><col width="43" /></colgroup>
            <thead><tr><th>北京</th><th>价格</th><th>√大单</th><th>仓差</th><th>性质</th></tr></thead>
            <tbody>
              {TICKS.map(([t, p, v, d, k], i) => {
                const late = t[0] === ':';
                const c = k[0] === 'r' ? C.red : C.green;
                return (
                  <tr key={i}>
                    <Num $c="#f0f0f0" $thin={late} $sec={late}>{t}</Num>
                    <Num $c={C.red}>{p}</Num>
                    <Num $c={c}>{v}</Num>
                    <Num $c={C.yellow}>{d}</Num>
                    <Num $c={c} $thin>{k.slice(1)}</Num>
                  </tr>
                );
              })}
            </tbody>
          </Ticks>
          <Foot><FootTab $on>笔</FootTab><FootTab>权</FootTab><FootRest /></Foot>
        </Quote>
      </Body>
      <Strip />
    </Window>
  );
}
